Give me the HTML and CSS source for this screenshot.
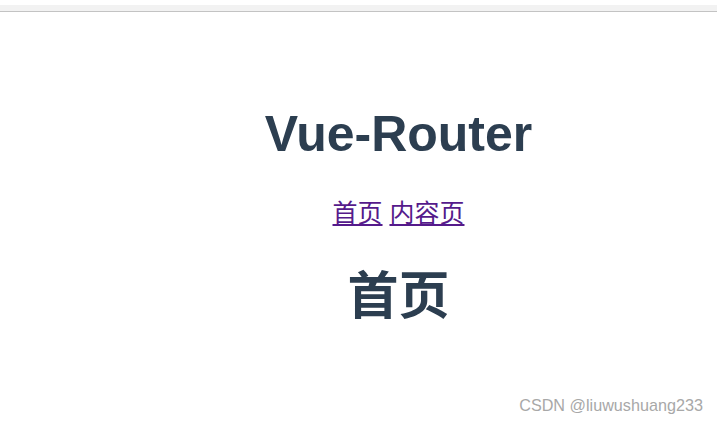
FILE: index.html
```html
<!DOCTYPE html>
<html lang="zh-CN">
<head>
<meta charset="utf-8">
<title>Vue-Router</title>
<link rel="stylesheet" href="styles.css">
</head>
<body>
<div class="topbar"><div class="topbar-band"></div></div>
<div class="app">
  <h1 class="title">Vue-Router</h1>
  <nav class="nav"><a href="#/home" class="link">首页</a> <a href="#/content" class="link">内容页</a></nav>
  <h1 class="page">首页</h1>
</div>
<div class="watermark">CSDN @liuwushuang233</div>
</body>
</html>
```

FILE: styles.css
```css
html, body {
  margin: 0;
  padding: 0;
  background: #ffffff;
}
body {
  width: 717px;
  height: 423px;
  overflow: hidden;
  position: relative;
  font-family: "Liberation Sans", "Noto Sans CJK SC", Arial, sans-serif;
}
.topbar {
  padding-top: 5px;
}
.topbar-band {
  height: 6px;
  background: #f2f2f2;
  border-bottom: 1px solid #c3c3c3;
}
.app {
  padding-left: 80px;
  text-align: center;
  color: #2c3e50;
}
.title {
  margin: 97px 0 0 0;
  font-size: 50px;
  line-height: 50px;
  font-weight: bold;
}
.nav {
  margin-top: 39px;
  font-size: 25px;
  line-height: 30px;
}
.link {
  color: #551a8b;
  text-decoration: underline;
}
.page {
  margin: 44px 0 0 0;
  font-size: 51px;
  line-height: 50px;
  font-weight: bold;
}
.watermark {
  position: absolute;
  top: 397px;
  right: 14px;
  font-size: 16.2px;
  line-height: 16px;
  color: #a8a8a8;
}
```
